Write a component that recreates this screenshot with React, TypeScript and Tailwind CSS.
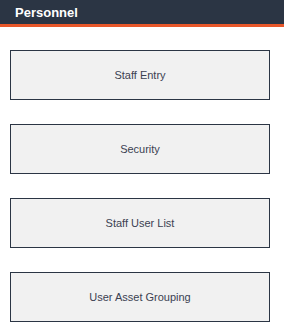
import React from "react";

const items = ["Staff Entry", "Security", "Staff User List", "User Asset Grouping"];

export default function App() {
  return (
    <div className="w-[284px] h-[333px] bg-white" style={{ fontFamily: '"Liberation Sans", Arial, sans-serif' }}>
      <div className="h-[24px] bg-[#2b3544] flex items-center pl-[15px]">
        <span className="text-white font-bold text-[13px] leading-none">Personnel</span>
      </div>
      <div className="h-[3px] bg-[#e8572a]" />
      <div className="flex flex-col gap-[24px] pt-[23px] pl-[10px]">
        {items.map((t) => (
          <div
            key={t}
            className="w-[260px] h-[50px] border border-[#2b3544] bg-[#f1f1f1] flex items-center justify-center text-[11px] text-[#3b4151]"
          >
            {t}
          </div>
        ))}
      </div>
    </div>
  );
}
